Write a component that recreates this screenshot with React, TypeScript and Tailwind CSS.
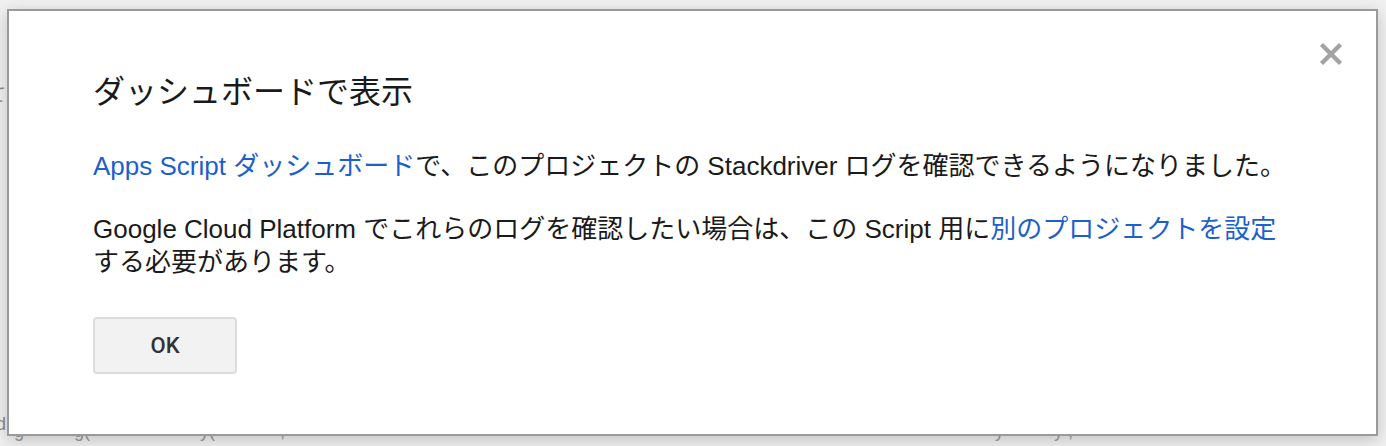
import React from "react";

const FONT = { fontFamily: '"Liberation Sans", "Noto Sans CJK JP", sans-serif' };

function BackgroundPage() {
  return (
    <div className="absolute inset-0 text-[18px] text-[#8a8a8a]">
      <span className="absolute left-[-12px] top-[82px]">て</span>
      <span className="absolute left-[-6px] top-[186px]">;</span>
      <span className="absolute left-[-4px] top-[411px]">d</span>
      <div className="absolute left-[14px] top-[418px] flex whitespace-pre text-[#9a9a9a]">
        <span>{"g          g(                      y(             ,  "}</span>
        <span className="ml-[700px]">{"y          y ,"}</span>
      </div>
    </div>
  );
}

export default function App() {
  return (
    <div
      className="relative w-[1386px] h-[446px] overflow-hidden bg-[#f1f1f1] pl-[7px] pt-[9px]"
      style={FONT}
    >
      <BackgroundPage />

      {/* dialog */}
      <div className="relative w-[1371px] h-[427px] bg-white border-2 border-[#9a9a9a] shadow-[0_4px_16px_rgba(0,0,0,0.2)] px-[84px] pt-[57px]">
        <button className="absolute right-[33px] top-[31px] w-[24px] h-[24px]">
          <svg width="24" height="24" viewBox="0 0 24 24">
            <path
              d="M2.5 2.5 L21.5 21.5 M21.5 2.5 L2.5 21.5"
              stroke="#a3a3a3"
              strokeWidth="4.5"
              fill="none"
            />
          </svg>
        </button>

        <div className="flex flex-col items-start">
          <h1 className="text-[32px] leading-[48px] font-normal text-[#1a1a1a]">
            ダッシュボードで表示
          </h1>

          <p className="mt-[34px] text-[26px] leading-[33px] text-[#1a1a1a] whitespace-nowrap">
            <span className="text-[#1d5fcb]">Apps Script ダッシュボード</span>
            で、このプロジェクトの Stackdriver ログを確認できるようになりました。
          </p>

          <p className="mt-[30px] text-[26px] leading-[33px] text-[#1a1a1a] whitespace-nowrap">
            Google Cloud Platform でこれらのログを確認したい場合は、この Script 用に
            <span className="text-[#1d5fcb]">別のプロジェクトを設定</span>
            <br />
            する必要があります。
          </p>

          <button
            className="mt-[38px] w-[144px] h-[57px] rounded-[4px] border-2 border-[#dcdcdc] bg-[#f2f2f2] text-[22px] font-medium text-[#333]"
            style={{ fontFamily: "Roboto, sans-serif" }}
          >
            OK
          </button>
        </div>
      </div>
    </div>
  );
}
